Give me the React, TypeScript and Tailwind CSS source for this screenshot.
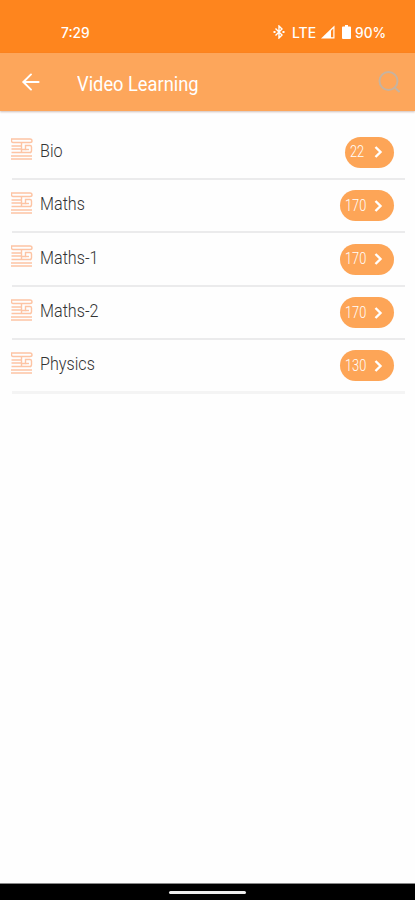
import { ArrowLeft } from "lucide-react";

interface Subject {
  name: string;
  count: number;
}

const SUBJECTS: Subject[] = [
  { name: "Bio", count: 22 },
  { name: "Maths", count: 170 },
  { name: "Maths-1", count: 170 },
  { name: "Maths-2", count: 170 },
  { name: "Physics", count: 130 },
];

// ============================================================================
// Icons
// ============================================================================

/** Stack of books shown in front of every subject. */
function BooksIcon() {
  return (
    <svg className="w-[22px] h-[22px] shrink-0" viewBox="0 0 22 22" fill="none" stroke="#fdc4a4" strokeWidth={1.4}>
      <path d="M0.500 1H19Q21 1 21 3Q21 4.500 19 4.500H2Q0.500 4.500 0.500 3Z" />
      <path d="M0.500 8H10.500M0.500 11H10.500M0.500 14.500H20M10.500 4.500V14.500" />
      <path d="M10.500 11.500H14.500V7.500H19Q20.500 7.500 20.500 9V13Q20.500 14.500 19 14.500" />
      <path d="M14.500 11.500H18" />
      <path d="M0 18H21M0 21H21" />
    </svg>
  );
}

function BluetoothIcon() {
  return (
    <svg className="w-3 h-[14px]" viewBox="0 0 12 14" fill="none" stroke="#fff" strokeWidth={1.4}>
      <path d="M2.500 3.500L9 10L6 13V1L9 4L2.500 10.500" />
      <path d="M0.500 7H2.500M9.500 7H11.500" strokeWidth={2} />
    </svg>
  );
}

function SignalIcon() {
  return (
    <svg className="w-[14px] h-[14px]" viewBox="0 0 14 14">
      <path d="M0 13.500L13.500 0.500V13.500Z" fill="#fff" />
      <path d="M10 5.800L12.300 3.500V12.300H10Z" fill="#fe851e" />
    </svg>
  );
}

function BatteryIcon() {
  return (
    <svg className="w-[9px] h-[14px]" viewBox="0 0 9 14" fill="#fff">
      <path d="M3 0H6V1.500H8Q9 1.500 9 2.500V13Q9 14 8 14H1Q0 14 0 13V2.500Q0 1.500 1 1.500H3Z" />
    </svg>
  );
}

function SearchIcon() {
  return (
    <svg className="w-[22px] h-[22px]" viewBox="0 0 22 22" fill="none" stroke="#c6b3a0" strokeWidth={2}>
      <circle cx="10.500" cy="10" r="9" />
      <path d="M16.500 16.500L21.500 21" />
    </svg>
  );
}

// ============================================================================
// Bars
// ============================================================================

function StatusBar() {
  return (
    <div className="h-[53px] bg-[#fe851e] pt-[11px] pl-[61px] pr-[29px] flex items-center justify-between text-white text-[14px] font-medium font-['Inter',sans-serif]">
      <span className="w-[29px] whitespace-nowrap">
        <span className="inline-block origin-left scale-x-[0.98]">7:29</span>
      </span>
      <div className="flex items-center">
        <BluetoothIcon />
        <span className="ml-[7px] w-[25px]">
          <span className="inline-block origin-left">LTE</span>
        </span>
        <span className="ml-1 flex"><SignalIcon /></span>
        <span className="ml-[7px] flex"><BatteryIcon /></span>
        <span className="ml-1 w-[31px]">
          <span className="inline-block origin-left scale-x-[0.98]">90%</span>
        </span>
      </div>
    </div>
  );
}

function Header() {
  return (
    <header className="h-[58px] bg-[#fda65b] pl-[18px] pr-[15px] flex items-center text-white shadow-[0_1px_2px_rgba(120,70,50,0.35)]">
      <ArrowLeft className="w-[26px] h-[26px]" strokeWidth={1.8} />
      <h1 className="ml-[33px] mt-[3px] text-[21px] leading-6 whitespace-nowrap">
        <span className="inline-block origin-left scale-x-[0.87]">Video Learning</span>
      </h1>
      <span className="ml-auto"><SearchIcon /></span>
    </header>
  );
}

// ============================================================================
// Subject list
// ============================================================================

function CountPill({ count }: { count: number }) {
  return (
    <div className="h-[31px] pl-[5px] pr-[11px] rounded-full bg-[#fda557] flex items-center text-white">
      <span className={count < 100 ? "w-[16px] text-base" : "w-[21px] text-base"}>
        <span className="inline-block origin-left scale-x-[0.8] font-light">{count}</span>
      </span>
      <svg className="ml-[8px] w-[9px] h-[12px]" viewBox="0 0 9 12" fill="none" stroke="#fff" strokeWidth={2.4}>
        <path d="M1.500 1L6.500 6L1.500 11" />
      </svg>
    </div>
  );
}

function SubjectRow({ subject }: { subject: Subject }) {
  return (
    <li className="h-[53.5px] pr-[11px] flex items-center border-b-2 border-[#ebebec] last:border-b-3 last:border-[#f4f4f4]">
      <span className="-ml-px mb-[6px] flex"><BooksIcon /></span>
      <span className="ml-[7px] mb-[3px] text-[19px] leading-6 font-light text-[#333]">
        <span className="inline-block origin-left scale-x-[0.85]">{subject.name}</span>
      </span>
      <span className="ml-auto"><CountPill count={subject.count} /></span>
    </li>
  );
}

export default function App() {
  return (
    <div className="h-[900px] w-full bg-[#fefefe] flex flex-col font-['Roboto',sans-serif]">
      <StatusBar />
      <Header />
      <main className="flex-1 pt-[15.4px] pl-3 pr-[10px]">
        <ul>
          {SUBJECTS.map((subject) => (
            <SubjectRow key={subject.name} subject={subject} />
          ))}
        </ul>
      </main>
      <div className="h-[17px] bg-black border-t border-[#888] flex items-center justify-center">
        <div className="w-[77px] h-[3px] rounded-full bg-[#eee]" />
      </div>
    </div>
  );
}
